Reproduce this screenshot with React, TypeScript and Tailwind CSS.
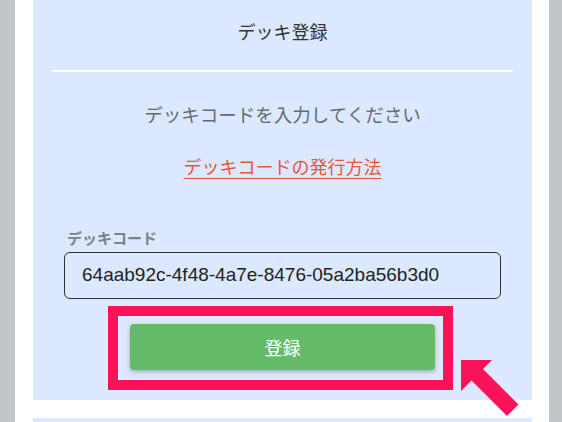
import React from "react"

const jp = "font-['Noto_Sans_CJK_JP','Noto_Sans',sans-serif]"

function Arrow() {
  return (
    <svg className="pointer-events-none absolute left-0 top-0" width="562" height="422" viewBox="0 0 562 422">
      <polygon
        points="461,360 492,360 483,369 518.5,404.5 507,416 471.5,380.5 461,391"
        fill="#fc1257"
      />
    </svg>
  )
}

export default function App() {
  return (
    <div className={`relative h-[422px] w-[562px] overflow-hidden bg-[#c3c6c9] pl-[15px] pr-[13px] ${jp}`}>
      <div className="h-full bg-white pl-[18px] pr-[17px]">
        <div className="flex flex-col bg-[#dbe8fd]">
          <div className="flex h-[70px] items-start justify-center pt-[20px]">
            <h2 className="text-[18px] leading-[22px] text-[#333]">デッキ登録</h2>
          </div>
          <div className="mx-[19px] h-[2px] bg-white" />
          <p className="mt-[29px] text-center text-[18.5px] leading-[26px] text-[#666b73]">
            デッキコードを入力してください
          </p>
          <div className="mt-[26px] text-center">
            <a className="text-[18px] leading-[26px] text-[#e65640] underline underline-offset-[4px]">
              デッキコードの発行方法
            </a>
          </div>
          <div className="mx-[31px] mt-[50px] flex flex-col">
            <label className="pl-[3px] text-[15px] font-bold leading-[18px] text-[#7d8188]">デッキコード</label>
            <div className="mt-[5px] flex h-[47px] items-center rounded-[6px] border-[1.5px] border-[#2e2f33] px-[17px]">
              <span className="font-['Liberation_Sans',Arial,sans-serif] text-[19px] text-[#222]">
                64aab92c-4f48-4a7e-8476-05a2ba56b3d0
              </span>
            </div>
          </div>
          <div className="ml-[75px] mt-[7px] w-[345px] border-[10px] border-[#fc1257] pb-[10px] pl-[12px] pr-[8px] pt-[8px]">
            <button className="flex h-[46px] w-full items-center justify-center rounded-[4px] bg-[#66bb6a] text-[18px] text-white shadow-[0_2px_4px_rgba(0,0,0,0.25)]">
              登録
            </button>
          </div>
          <div className="h-[10px]" />
        </div>
        <div className="h-[18px]" />
        <div className="h-[40px] bg-[#dbe8fd]" />
      </div>
      <Arrow />
    </div>
  )
}
